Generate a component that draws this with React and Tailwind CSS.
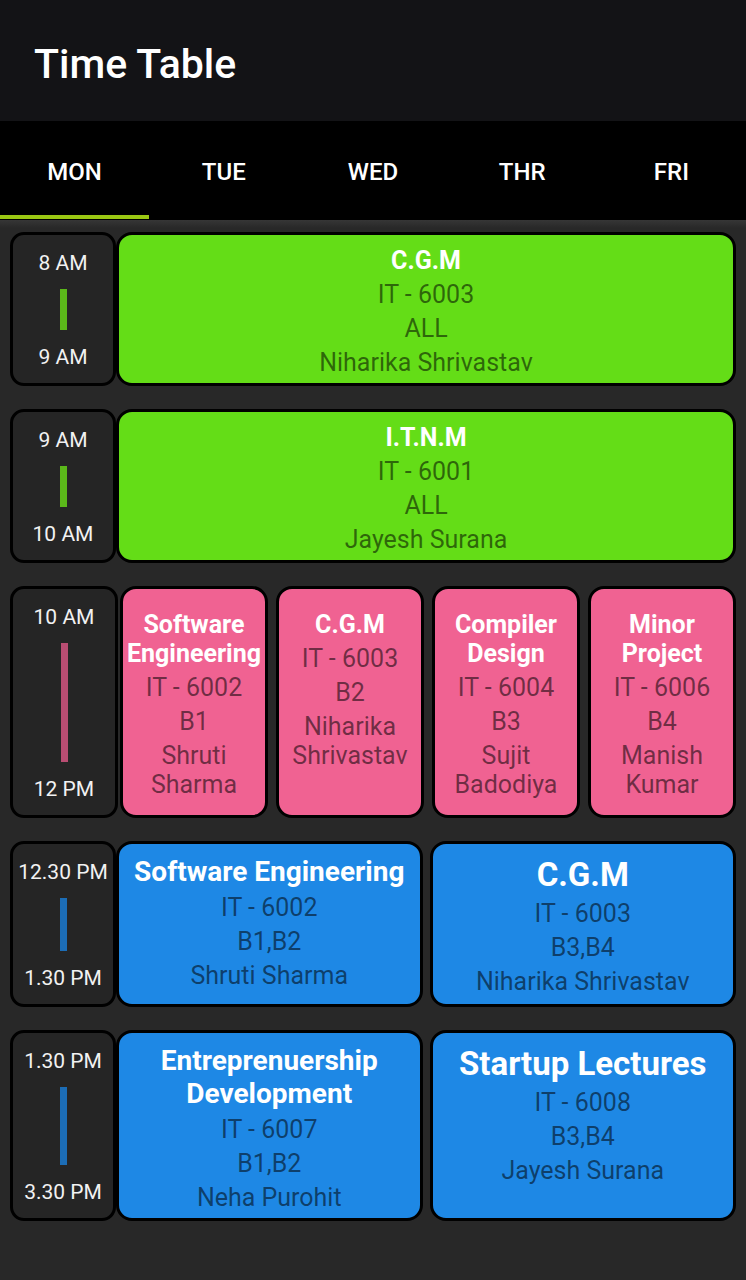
import React, { useState } from 'react'

/* ================= DATA ================= */
const DAYS = ['MON', 'TUE', 'WED', 'THR', 'FRI']

const ROWS = [
  {
    from: '8 AM',
    to: '9 AM',
    h: 'h-[154px]',
    tone: 'green',
    cards: [{ title: 'C.G.M', code: 'IT - 6003', batch: 'ALL', teacher: 'Niharika Shrivastav' }],
  },
  {
    from: '9 AM',
    to: '10 AM',
    h: 'h-[154px]',
    tone: 'green',
    cards: [{ title: 'I.T.N.M', code: 'IT - 6001', batch: 'ALL', teacher: 'Jayesh Surana' }],
  },
  {
    from: '10 AM',
    to: '12 PM',
    h: 'h-[232px]',
    tone: 'pink',
    cards: [
      { title: 'Software\nEngineering', code: 'IT - 6002', batch: 'B1', teacher: 'Shruti\nSharma' },
      { title: 'C.G.M', code: 'IT - 6003', batch: 'B2', teacher: 'Niharika\nShrivastav' },
      { title: 'Compiler\nDesign', code: 'IT - 6004', batch: 'B3', teacher: 'Sujit\nBadodiya' },
      { title: 'Minor\nProject', code: 'IT - 6006', batch: 'B4', teacher: 'Manish\nKumar' },
    ],
  },
  {
    from: '12.30 PM',
    to: '1.30 PM',
    h: 'h-[166px]',
    tone: 'blue',
    cards: [
      { title: 'Software Engineering', big: false, code: 'IT - 6002', batch: 'B1,B2', teacher: 'Shruti Sharma' },
      { title: 'C.G.M', big: true, code: 'IT - 6003', batch: 'B3,B4', teacher: 'Niharika Shrivastav' },
    ],
  },
  {
    from: '1.30 PM',
    to: '3.30 PM',
    h: 'h-[191px]',
    tone: 'blue',
    cards: [
      { title: 'Entreprenuership\nDevelopment', big: false, code: 'IT - 6007', batch: 'B1,B2', teacher: 'Neha Purohit' },
      { title: 'Startup Lectures', big: true, code: 'IT - 6008', batch: 'B3,B4', teacher: 'Jayesh Surana' },
    ],
  },
]

const TONES = {
  green: { card: 'bg-[#64dd17] pt-[11px]', bar: 'bg-[#5bb81a]', wrap: 'gap-0', time: 'w-[106px]' },
  pink: { card: 'bg-[#f06292] pt-[21px]', bar: 'bg-[#b94d72]', wrap: 'gap-[2px]', time: 'w-[108px]' },
  blue: { card: 'bg-[#1e88e5] pt-[11px]', bar: 'bg-[#1c6db6]', wrap: 'gap-0', time: 'w-[106px]' },
}

/* ================= HELPERS ================= */
function TimeBox({ from, to, tone }) {
  const t = TONES[tone]
  return (
    <div className={`${t.time} shrink-0 h-full rounded-[14px] border-[3px] border-black bg-[#252525] flex flex-col items-center pt-[16px] pb-[13px] text-[21px] leading-[25px] text-[#f2f2f2]`}>
      <span>{from}</span>
      <div className={`flex-1 w-[7px] mt-[13px] mb-[15px] ${t.bar}`} />
      <span>{to}</span>
    </div>
  )
}

function TitleText({ card, tone }) {
  let size = 'text-[25px] leading-[29px]'
  if (tone === 'blue') size = card.big ? 'text-[33px] leading-[39px]' : 'text-[28px] leading-[33px]'
  return <div className={`${size} font-bold text-white whitespace-pre-line`}>{card.title}</div>
}

function ClassCard({ card, tone }) {
  return (
    <div className={`flex-1 min-w-0 h-full rounded-[16px] border-[3px] border-black flex flex-col items-center gap-[5px] text-center ${TONES[tone].card}`}>
      <TitleText card={card} tone={tone} />
      <div className="text-[25px] leading-[29px] text-black/55">{card.code}</div>
      <div className="text-[25px] leading-[29px] text-black/55">{card.batch}</div>
      <div className="text-[25px] leading-[29px] text-black/55 whitespace-pre-line">{card.teacher}</div>
    </div>
  )
}

/* ================= APP ================= */
export default function App() {
  const [day, setDay] = useState(0)

  return (
    <div className="w-[746px] min-h-[1280px] bg-[#282828] font-['Roboto',sans-serif]">
      {/* ===== HEADER ===== */}
      <header className="h-[121px] bg-[#131316] flex items-center px-[34px] pt-[8px]">
        <h1 className="text-[41px] font-medium text-white">Time Table</h1>
      </header>

      {/* ===== TABS ===== */}
      <nav className="h-[99px] bg-black grid grid-cols-5">
        {DAYS.map((d, i) => (
          <button key={d} onClick={() => setDay(i)} className="relative flex items-center justify-center pt-[2px] text-[24px] font-medium text-white">
            {d}
            {day === i && <span className="absolute left-0 right-0 bottom-[1px] h-[4px] bg-[#9bc813]" />}
          </button>
        ))}
      </nav>

      {/* ===== ROWS ===== */}
      <div className="h-[8px] bg-linear-to-b from-[#363636] to-[#282828]" />
      <main className="pt-[4px] px-[10px] flex flex-col gap-[23px]">
        {ROWS.map((row, i) => (
          <div key={i} className={`${row.h} flex ${TONES[row.tone].wrap}`}>
            <TimeBox from={row.from} to={row.to} tone={row.tone} />
            <div className={`flex-1 h-full flex ${row.tone === 'pink' ? 'gap-[8px]' : 'gap-[7px]'}`}>
              {row.cards.map((c, j) => (
                <ClassCard key={j} card={c} tone={row.tone} />
              ))}
            </div>
          </div>
        ))}
      </main>
    </div>
  )
}
